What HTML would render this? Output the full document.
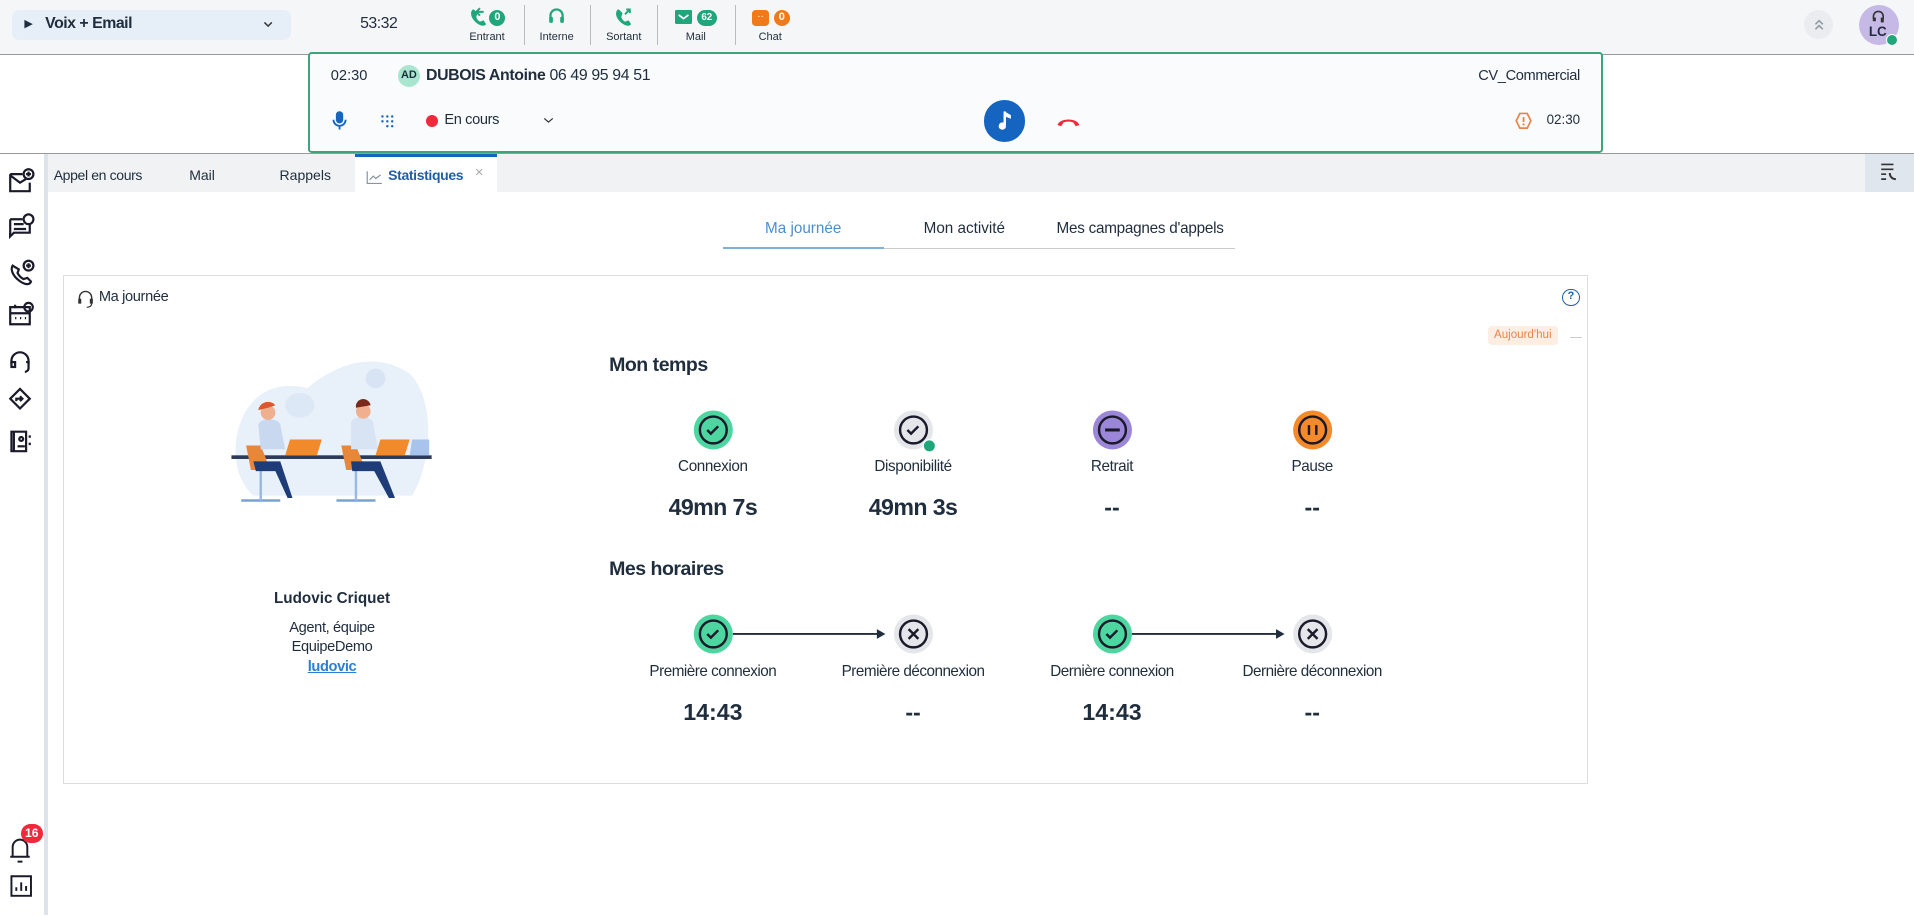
<!DOCTYPE html>
<html><head><meta charset="utf-8">
<style>
*{box-sizing:border-box;margin:0;padding:0}
html,body{width:1914px;height:916px;overflow:hidden;background:#fff}
#w{width:1568px;height:750px;zoom:1.220663;position:relative;font-family:"Liberation Sans",sans-serif;color:#1f2d3d;font-size:12px}
.a{position:absolute}
.c{text-align:center}
.nar{transform-origin:left center;display:inline-block}
</style></head><body><div id="w">
<!-- top bar -->
<div class="a" style="left:0;top:0;width:1568px;height:44px;background:#f5f6f8"></div>
<div class="a" style="left:10px;top:8px;width:228px;height:25px;background:#e6eef8;border-radius:6px"></div>
<div class="a" style="left:20px;top:14px;font-size:9px">▶</div>
<div class="a" style="left:37px;top:12px;font-weight:bold;font-size:13px;letter-spacing:-.4px">Voix + Email</div>
<svg class="a" style="left:215px;top:16px" width="10" height="8"><path d="M2 2l3 3 3-3" stroke="#333" fill="none" stroke-width="1.2"/></svg>
<div class="a" style="left:295px;top:12px;font-size:13px;letter-spacing:-.4px">53:32</div>
<!-- status icons -->
<svg class="a" style="left:384px;top:6px" width="14" height="16"><path d="M3 2c-2 2-2 6 2 10s8 4 9 2l-2-3-3 1c-2-1-3-3-3-4l1-3-3-3z" fill="#1fa67a"/><path d="M9 1l-3 3 3 3M6 4h6" stroke="#1fa67a" stroke-width="1.6" fill="none"/></svg>
<div class="a c" style="left:401px;top:8px;width:13px;height:13px;border-radius:7px;background:#1fa67a;color:#fff;font-size:9px;font-weight:bold;line-height:13px">0</div>
<div class="a c" style="left:378px;top:25px;width:42px;font-size:9px">Entrant</div>
<div class="a" style="left:429px;top:4px;width:1px;height:33px;background:#bbb"></div>
<svg class="a" style="left:449px;top:6px" width="14" height="15"><path d="M2 10V7a5 5 0 0 1 10 0v3" stroke="#1fa67a" stroke-width="1.8" fill="none"/><rect x="1" y="8" width="3" height="5" rx="1" fill="#1fa67a"/><rect x="10" y="8" width="3" height="5" rx="1" fill="#1fa67a"/></svg>
<div class="a c" style="left:436px;top:25px;width:40px;font-size:9px">Interne</div>
<div class="a" style="left:483px;top:4px;width:1px;height:33px;background:#bbb"></div>
<svg class="a" style="left:503px;top:6px" width="16" height="16"><path d="M3 2c-2 2-2 6 2 10s8 4 9 2l-2-3-3 1c-2-1-3-3-3-4l1-3-3-3z" fill="#1fa67a"/><path d="M9 6l4-4M10 2h3v3" stroke="#1fa67a" stroke-width="1.5" fill="none"/></svg>
<div class="a c" style="left:491px;top:25px;width:40px;font-size:9px">Sortant</div>
<div class="a" style="left:538px;top:4px;width:1px;height:33px;background:#bbb"></div>
<div class="a" style="left:553px;top:8px;width:14px;height:12px;background:#1fa67a;border-radius:1px"></div>
<svg class="a" style="left:553px;top:8px" width="14" height="12"><path d="M3 4l4 3 4-3" stroke="#fff" stroke-width="1.4" fill="none"/></svg>
<div class="a c" style="left:571px;top:8px;width:16px;height:13px;border-radius:7px;background:#1fa67a;color:#fff;font-size:8px;font-weight:bold;line-height:13px">62</div>
<div class="a c" style="left:550px;top:25px;width:40px;font-size:9px">Mail</div>
<div class="a" style="left:602px;top:4px;width:1px;height:33px;background:#bbb"></div>
<div class="a" style="left:616px;top:8px;width:14px;height:13px;background:#f07a1a;border-radius:3px;color:#fff;font-size:8px;line-height:11px;text-align:center">··</div>
<div class="a c" style="left:634px;top:8px;width:13px;height:13px;border-radius:7px;background:#f07a1a;color:#fff;font-size:9px;font-weight:bold;line-height:13px">0</div>
<div class="a c" style="left:611px;top:25px;width:40px;font-size:9px">Chat</div>
<div class="a" style="left:1478px;top:8px;width:24px;height:24px;border-radius:12px;background:#eaecef"></div>
<svg class="a" style="left:1485px;top:14px" width="10" height="12"><path d="M2 6l3-3 3 3M2 10l3-3 3 3" stroke="#8a94a0" fill="none" stroke-width="1.2"/></svg>
<div class="a" style="left:1523px;top:4px;width:33px;height:33px;border-radius:17px;background:#c7b9e6"></div>
<svg class="a" style="left:1533px;top:7px" width="12" height="12"><path d="M2 8V6a4 4 0 0 1 8 0v2" stroke="#333" fill="none" stroke-width="1.3"/><rect x="1.5" y="7" width="2.5" height="3" fill="#333"/><rect x="8" y="7" width="2.5" height="4" fill="#333"/></svg>
<div class="a" style="left:1531px;top:20px;font-size:11px;font-weight:bold">LC</div>
<div class="a" style="left:1545px;top:28px;width:10px;height:10px;border-radius:5px;background:#1fa67a;border:1px solid #fff"></div>
<!-- second band -->
<div class="a" style="left:0;top:44px;width:1568px;height:82px;background:#fff;border-top:1px solid #999;border-bottom:1px solid #999"></div>
<div class="a" style="left:252px;top:43px;width:1061px;height:82px;background:#fafbfc;border:2px solid #3ca57e;border-radius:3px"></div>
<div class="a" style="left:271px;top:56px;font-size:12px">02:30</div>
<div class="a c" style="left:326px;top:53px;width:18px;height:18px;border-radius:9px;background:#a8e6cf;font-size:9px;font-weight:bold;line-height:18px">AD</div>
<div class="a" style="left:349px;top:55px;font-size:13px;letter-spacing:-.3px"><b>DUBOIS Antoine</b> 06 49 95 94 51</div>
<div class="a" style="left:1211px;top:56px;font-size:12px;letter-spacing:-.3px">CV_Commercial</div>
<svg class="a" style="left:271px;top:90px" width="14" height="18"><rect x="4" y="1" width="6" height="10" rx="3" fill="#1565c0"/><path d="M2 8a5 5 0 0 0 10 0M7 13v3" stroke="#1565c0" stroke-width="1.5" fill="none"/></svg>
<svg class="a" style="left:311px;top:93px" width="12" height="12" fill="#1565c0"><circle cx="2" cy="2" r="1"/><circle cx="6" cy="2" r="1"/><circle cx="10" cy="2" r="1"/><circle cx="2" cy="6" r="1"/><circle cx="6" cy="6" r="1"/><circle cx="10" cy="6" r="1"/><circle cx="6" cy="10" r="1"/><circle cx="10" cy="10" r="1"/></svg>
<div class="a" style="left:274px;top:105px;width:300px;height:0"></div>
<div class="a" style="left:349px;top:94px;width:10px;height:10px;border-radius:5px;background:#f0283c"></div>
<div class="a" style="left:364px;top:92px;font-size:12px;letter-spacing:-.3px">En cours</div>
<svg class="a" style="left:445px;top:95px" width="9" height="7"><path d="M1 2l3.5 3 3.5-3" stroke="#333" fill="none"/></svg>
<div class="a" style="left:806px;top:82px;width:34px;height:34px;border-radius:17px;background:#1565c0"></div>
<svg class="a" style="left:815px;top:89px" width="16" height="20"><path d="M8 2v11" stroke="#fff" stroke-width="2"/><circle cx="6" cy="14" r="3" fill="#fff"/><path d="M8 2l5 3v3l-5-2z" fill="#fff"/></svg>
<svg class="a" style="left:864px;top:93px" width="22" height="12"><path d="M2 9c2-6 16-6 18 0l-3 1-2-3c-2-1-6-1-8 0l-2 3z" fill="#f0283c"/></svg>
<svg class="a" style="left:1241px;top:91px" width="14" height="16"><path d="M4 2h6l3 6-3 6H4L1 8z" stroke="#e8844a" fill="none" stroke-width="1.4"/><path d="M7 5v4" stroke="#e8844a" stroke-width="1.5"/><circle cx="7" cy="11" r=".9" fill="#e8844a"/></svg>
<div class="a" style="left:1267px;top:92px;font-size:11px">02:30</div>
<!-- tabs bar -->
<div class="a" style="left:36px;top:126px;width:1532px;height:31px;background:#f0f2f4"></div>
<div class="a" style="left:44px;top:137px;font-size:11.5px;letter-spacing:-.3px">Appel en cours</div>
<div class="a" style="left:155px;top:137px;font-size:11.5px">Mail</div>
<div class="a" style="left:229px;top:137px;font-size:11.5px">Rappels</div>
<div class="a" style="left:291px;top:126px;width:116px;height:31px;background:#fff;border-top:3px solid #1565c0"></div>
<svg class="a" style="left:300px;top:139px" width="14" height="12"><path d="M1 1v10h12M3 8l3-3 2 2 4-3" stroke="#8a94a0" fill="none"/></svg>
<div class="a" style="left:318px;top:137px;font-size:11.5px;font-weight:bold;color:#1f5fa8;letter-spacing:-.3px">Statistiques</div>
<div class="a" style="left:389px;top:135px;font-size:12px;color:#aaa">×</div>
<div class="a" style="left:1528px;top:126px;width:40px;height:31px;background:#dfe6ee"></div>
<svg class="a" style="left:1540px;top:133px" width="16" height="16"><path d="M1 2h10M1 6h10M1 10h4M1 14h4" stroke="#333" stroke-width="1.4"/><path d="M8 9c0 3 2 5 5 5" stroke="#333" stroke-width="1.6" fill="none"/></svg>
<!-- left sidebar -->
<div class="a" style="left:0;top:126px;width:36px;height:624px;background:#fff"></div>
<div class="a" style="left:36px;top:126px;width:3px;height:624px;background:#dde3ea"></div>
<svg class="a" style="left:7px;top:138px" width="22" height="240" fill="none" stroke="#1a1a2a" stroke-width="1.8">
<path d="M1 5h10M1 5v14h16v-7M1 6l8 6 5-3"/><circle cx="16" cy="5" r="4"/><path d="M16 3v4M14 5h4"/>
<path d="M1 42h10M1 42v11l-1 4 4-4h13v-7M4 46h8M4 50h10"/><circle cx="16" cy="42" r="4"/>
<path d="M3 80c-2 3 0 8 5 12s9 4 10 1l-3-3-3 1c-2-1-4-3-5-5l1-3z"/><circle cx="16" cy="80" r="4"/><path d="M16 78v4M14 80h4"/>
<path d="M1 114h16v14H1zM1 119h16M5 112v3M5 123h1M9 123h1M13 123h1"/><circle cx="16" cy="114" r="3.5"/>
<path d="M2 161v-3a7 7 0 0 1 14 0v3"/><rect x="2" y="159" width="3" height="4"/><path d="M14 159h2v5c0 2-2 3-3 3"/>
<path d="M9 181l8 8-8 8-8-8zM6 191v-2h5M9 187l2 2-2 2"/>
<path d="M2 216h12v16H2zM4 216v16M17 219v2M17 225v2"/><circle cx="10" cy="222" r="1.6"/><path d="M7 228h6"/>
</svg>
<svg class="a" style="left:7px;top:685px" width="22" height="55" fill="none" stroke="#1a1a2a" stroke-width="1.6"><path d="M3 17v-8a6 6 0 0 1 12 0v8M1 17h16M7 21h4"/><path d="M2 33h16v16H2zM6 45v-3M10 45v-7M14 45v-4"/></svg>
<div class="a c" style="left:17px;top:675px;width:18px;height:16px;border-radius:8px;background:#f0283c;color:#fff;font-size:10px;font-weight:bold;line-height:16px">16</div>
<!-- sub tabs -->
<div class="a c" style="left:592px;top:180px;width:132px;font-size:12.5px;color:#4a8fd0">Ma journée</div>
<div class="a c" style="left:724px;top:180px;width:132px;font-size:12.5px">Mon activité</div>
<div class="a c" style="left:856px;top:180px;width:156px;font-size:12.5px;letter-spacing:-.2px">Mes campagnes d'appels</div>
<div class="a" style="left:592px;top:203px;width:420px;height:1px;background:#ccc"></div>
<div class="a" style="left:592px;top:202px;width:132px;height:2px;background:#7fb0d8"></div>
<!-- card -->
<div class="a" style="left:52px;top:225px;width:1249px;height:417px;border:1px solid #dadde2"></div>
<svg class="a" style="left:63px;top:237px" width="14" height="16"><path d="M2 9V7a5 5 0 0 1 10 0v2" stroke="#333" fill="none" stroke-width="1.2"/><rect x="1" y="8" width="2.5" height="4" fill="#333"/><rect x="10.5" y="8" width="2.5" height="4" fill="#333"/><path d="M12 12c0 2-2 3-4 3" stroke="#333" fill="none"/></svg>
<div class="a" style="left:81px;top:237px;font-size:12px;letter-spacing:-.3px">Ma journée</div>
<div class="a c" style="left:1280px;top:237px;width:14px;height:14px;border-radius:7px;border:1.5px solid #1f5fa8;color:#1f5fa8;font-size:9px;font-weight:bold;line-height:11px">?</div>
<div class="a" style="left:1219px;top:267px;width:57px;height:16px;background:#fdeee3;border-radius:3px;color:#e8844a;font-size:9.5px;line-height:16px;text-align:center">Aujourd'hui</div>
<div class="a" style="left:1286px;top:276px;width:10px;height:1px;background:#ccc"></div>
<!-- illustration -->
<svg class="a" style="left:188px;top:290px" width="170" height="140">
<path d="M12 50c10-20 30-28 52-22 30-25 60-28 84-12 20 20 20 70 2 100H20C2 100 2 70 12 50z" fill="#e8f0fa"/>
<circle cx="120" cy="20" r="8" fill="#d8e4f4"/><ellipse cx="58" cy="42" rx="12" ry="10" fill="#dde8f6"/>
<rect x="2" y="83" width="164" height="3" fill="#2a3a58"/>
<path d="M10 120h32M88 120h32" stroke="#7aa0d8" stroke-width="2"/>
<path d="M26 95v25M104 95v25" stroke="#9ab8e0" stroke-width="2"/>
<path d="M14 75h12l8 20H18z" fill="#e8863a"/><path d="M92 75h12l8 20H96z" fill="#e8863a"/>
<path d="M24 58c2-6 16-6 18 0l4 20H26z" fill="#c8d8ee"/><path d="M100 56c2-6 16-6 18 0l4 22h-22z" fill="#d8e4f4"/>
<circle cx="32" cy="48" r="6" fill="#f0b090"/><path d="M24 46a8 8 0 0 1 14-4l-6 2z" fill="#d85a2a"/>
<circle cx="110" cy="47" r="6" fill="#f0b090"/><path d="M104 44a6 6 0 0 1 12-2z" fill="#7a2a1a"/>
<path d="M20 88h22l10 30h-4l-10-22H22z" fill="#1e3c78"/><path d="M100 88h24l12 30h-5l-12-22h-18z" fill="#1e3c78"/>
<path d="M50 70h26l-4 13H46z" fill="#f08a2a"/><path d="M124 70h24l-4 13h-24z" fill="#f08a2a"/><path d="M150 70h14v13h-16z" fill="#a8c4ec"/>
</svg>
<div class="a c" style="left:172px;top:483px;width:200px;font-size:12.5px;font-weight:bold">Ludovic Criquet</div>
<div class="a c" style="left:172px;top:507px;width:200px;font-size:12px;line-height:16px;letter-spacing:-.3px">Agent, équipe<br>EquipeDemo<br><b style="color:#2a7fd4;text-decoration:underline">ludovic</b></div>
<!-- mon temps -->
<div class="a" style="left:499px;top:290px;font-size:16px;font-weight:bold;letter-spacing:-.4px">Mon temps</div>
<svg class="a" style="left:560px;top:334px" width="560" height="40">
<defs><path id="ck" d="M-5 0l3 3 6-6" fill="none" stroke="#1a1a2a" stroke-width="2"/></defs>
<circle cx="24" cy="18" r="16" fill="#4ed6a0"/><circle cx="24" cy="18" r="11" fill="none" stroke="#1a1a2a" stroke-width="2"/><use href="#ck" x="24" y="18"/>
<circle cx="188" cy="18" r="16" fill="#e4e6ea"/><circle cx="188" cy="18" r="11" fill="none" stroke="#1a1a2a" stroke-width="2"/><use href="#ck" x="188" y="18"/><circle cx="201" cy="31" r="5" fill="#1fa67a" stroke="#fff" stroke-width="1"/>
<circle cx="351" cy="18" r="16" fill="#9b86d8"/><circle cx="351" cy="18" r="11" fill="none" stroke="#1a1a2a" stroke-width="2"/><path d="M345 18h12" stroke="#1a1a2a" stroke-width="2.5"/>
<circle cx="515" cy="18" r="16" fill="#f48a2a"/><circle cx="515" cy="18" r="11" fill="none" stroke="#1a1a2a" stroke-width="2"/><path d="M512 14v8M518 14v8" stroke="#1a1a2a" stroke-width="2"/>
</svg>
<div class="a c" style="left:524px;top:375px;width:120px;font-size:12.5px;letter-spacing:-.3px">Connexion</div>
<div class="a c" style="left:688px;top:375px;width:120px;font-size:12.5px;letter-spacing:-.3px">Disponibilité</div>
<div class="a c" style="left:851px;top:375px;width:120px;font-size:12.5px;letter-spacing:-.3px">Retrait</div>
<div class="a c" style="left:1015px;top:375px;width:120px;font-size:12.5px;letter-spacing:-.3px">Pause</div>
<div class="a c" style="left:524px;top:405px;width:120px;font-size:19px;font-weight:bold;letter-spacing:-.5px">49mn 7s</div>
<div class="a c" style="left:688px;top:405px;width:120px;font-size:19px;font-weight:bold;letter-spacing:-.5px">49mn 3s</div>
<div class="a c" style="left:851px;top:405px;width:120px;font-size:19px;font-weight:bold">--</div>
<div class="a c" style="left:1015px;top:405px;width:120px;font-size:19px;font-weight:bold">--</div>
<!-- mes horaires -->
<div class="a" style="left:499px;top:457px;font-size:16px;font-weight:bold;letter-spacing:-.4px">Mes horaires</div>
<svg class="a" style="left:560px;top:501px" width="560" height="40">
<path d="M40 18h122M367 18h122" stroke="#1f2d3d" stroke-width="1.5"/><path d="M165 18l-7-4v8zM492 18l-7-4v8z" fill="#1f2d3d"/>
<circle cx="24" cy="18" r="16" fill="#4ed6a0"/><circle cx="24" cy="18" r="11" fill="none" stroke="#1a1a2a" stroke-width="2"/><use href="#ck" x="24" y="18"/>
<circle cx="188" cy="18" r="16" fill="#e4e6ea"/><circle cx="188" cy="18" r="11" fill="none" stroke="#1a1a2a" stroke-width="2"/><path d="M184 14l8 8M192 14l-8 8" stroke="#1a1a2a" stroke-width="2"/>
<circle cx="351" cy="18" r="16" fill="#4ed6a0"/><circle cx="351" cy="18" r="11" fill="none" stroke="#1a1a2a" stroke-width="2"/><use href="#ck" x="351" y="18"/>
<circle cx="515" cy="18" r="16" fill="#e4e6ea"/><circle cx="515" cy="18" r="11" fill="none" stroke="#1a1a2a" stroke-width="2"/><path d="M511 14l8 8M519 14l-8 8" stroke="#1a1a2a" stroke-width="2"/>
</svg>
<div class="a c" style="left:504px;top:543px;width:160px;font-size:12.5px;letter-spacing:-.4px">Première connexion</div>
<div class="a c" style="left:668px;top:543px;width:160px;font-size:12.5px;letter-spacing:-.4px">Première déconnexion</div>
<div class="a c" style="left:831px;top:543px;width:160px;font-size:12.5px;letter-spacing:-.4px">Dernière connexion</div>
<div class="a c" style="left:995px;top:543px;width:160px;font-size:12.5px;letter-spacing:-.4px">Dernière déconnexion</div>
<div class="a c" style="left:524px;top:573px;width:120px;font-size:19px;font-weight:bold">14:43</div>
<div class="a c" style="left:688px;top:573px;width:120px;font-size:19px;font-weight:bold">--</div>
<div class="a c" style="left:851px;top:573px;width:120px;font-size:19px;font-weight:bold">14:43</div>
<div class="a c" style="left:1015px;top:573px;width:120px;font-size:19px;font-weight:bold">--</div>
</div></body></html>
